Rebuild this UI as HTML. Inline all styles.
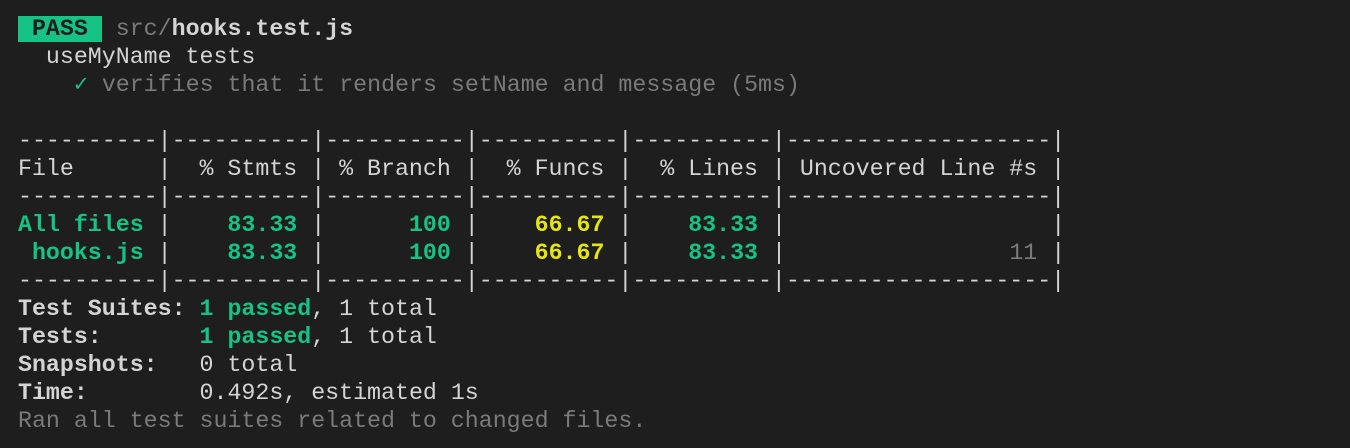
<!DOCTYPE html><html><head><style>
body{margin:0;background:#1e1e1e;width:1350px;height:448px;overflow:hidden}
pre{margin:0;padding:15px 0 0 18px;font-family:"Liberation Mono",monospace;font-size:23.27px;line-height:28px;color:#d4d4d4}
.b{font-weight:bold}.g{color:#17c384}.y{color:#e5e510}.d{color:#7a7a7a}
.pass{background:#17c384;color:#1e1e1e;font-weight:bold}
</style></head><body><pre><span class="pass"> PASS </span> <span class="d">src/</span><span class="b">hooks.test.js</span>
  useMyName tests
    <span class="g">✓</span> <span class="d">verifies that it renders setName and message (5ms)</span>

----------|----------|----------|----------|----------|-------------------|
File      |  % Stmts | % Branch |  % Funcs |  % Lines | Uncovered Line #s |
----------|----------|----------|----------|----------|-------------------|
<span class="g b">All files</span> | <span class="g b">   83.33</span> | <span class="g b">     100</span> | <span class="y b">   66.67</span> | <span class="g b">   83.33</span> |                   |
<span class="g b"> hooks.js</span> | <span class="g b">   83.33</span> | <span class="g b">     100</span> | <span class="y b">   66.67</span> | <span class="g b">   83.33</span> | <span class="d">               11</span> |
----------|----------|----------|----------|----------|-------------------|
<span class="b">Test Suites: </span><span class="g b">1 passed</span>, 1 total
<span class="b">Tests:       </span><span class="g b">1 passed</span>, 1 total
<span class="b">Snapshots:   </span>0 total
<span class="b">Time:        </span>0.492s, estimated 1s
<span class="d">Ran all test suites related to changed files.</span></pre></body></html>
